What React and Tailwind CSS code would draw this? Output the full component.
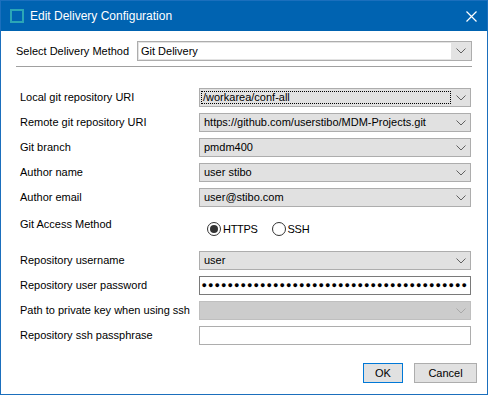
import React from "react";

const Chevron = ({ color = "#606060" }) => (
  <svg width="10" height="6" viewBox="0 0 10 6" fill="none">
    <path d="M0.5 0.5 L5 5 L9.5 0.5" stroke={color} strokeWidth="1" />
  </svg>
);

function Combo({ value, focused, disabled }) {
  return (
    <div
      className={`h-[19px] w-[272px] flex items-center border ${
        disabled ? "bg-[#cccccc] border-[#bfbfbf]" : "bg-[#e1e1e1] border-[#adadad]"
      }`}
    >
      <div className="flex-1 h-full flex items-center pl-[1px] pr-[1px]">
        {focused ? (
          <div className="flex-1 h-[13px] flex items-center border border-dotted border-black pl-[1px] leading-none">
            {value}
          </div>
        ) : (
          <span className="pl-[3px] leading-none">{value}</span>
        )}
      </div>
      <div className="w-[18px] flex items-center justify-center">
        <Chevron color={disabled ? "#a8a8a8" : "#606060"} />
      </div>
    </div>
  );
}

function Row({ label, children, className = "" }) {
  return (
    <div className={`flex items-center ${className}`}>
      <div className="w-[179px] leading-none">{label}</div>
      {children}
    </div>
  );
}

function Radio({ label, checked }) {
  return (
    <div className="flex items-center gap-[2px]">
      <div className="w-[14px] h-[14px] rounded-full border border-[#333333] bg-white flex items-center justify-center">
        {checked && <div className="w-[8px] h-[8px] rounded-full bg-[#333333]" />}
      </div>
      <span className="leading-none tracking-[-0.3px]">{label}</span>
    </div>
  );
}

export default function App() {
  return (
    <div
      className="w-[488px] h-[395px] flex flex-col border border-[#1b6fbd] bg-white text-[11px] text-black"
      style={{ fontFamily: '"Liberation Sans", Arial, sans-serif' }}
    >
      {/* title bar */}
      <div className="h-[30px] bg-[#0063b1] flex items-center pl-[9px] pr-[10px] text-white">
        <div className="w-[14px] h-[14px] border-2 border-[#2ba6b6]" />
        <span className="ml-[6px] text-[12px]">Edit Delivery Configuration</span>
        <div className="flex-1" />
        <svg width="11" height="11" viewBox="0 0 11 11">
          <path d="M0.5 0.5 L10.5 10.5 M10.5 0.5 L0.5 10.5" stroke="white" strokeWidth="1.2" />
        </svg>
      </div>

      {/* body */}
      <div className="flex-1 flex flex-col">
        <div className="flex items-center pl-[15px] mt-[10px]">
          <div className="w-[121px] leading-none">Select Delivery Method</div>
          <div className="w-[335px] h-[20px] border border-[#adadad] bg-[#e3e3e3] p-[1px] flex">
            <div className="flex-1 bg-white flex items-center pl-[2px] leading-none">Git Delivery</div>
            <div className="w-[19px] flex items-center justify-center">
              <Chevron />
            </div>
          </div>
        </div>
        <div className="ml-[15px] mt-[5px] w-[456px] h-px bg-[#a0a0a0]" />

        <div className="pl-[19px] flex flex-col">
          <Row label="Local git repository URI" className="mt-[21px]">
            <Combo value="/workarea/conf-all" focused />
          </Row>
          <Row label="Remote git repository URI" className="mt-[6px]">
            <Combo value="https://github.com/userstibo/MDM-Projects.git" />
          </Row>
          <Row label="Git branch" className="mt-[6px]">
            <Combo value="pmdm400" />
          </Row>
          <Row label="Author name" className="mt-[6px]">
            <Combo value="user  stibo" />
          </Row>
          <Row label="Author email" className="mt-[6px]">
            <Combo value="user@stibo.com" />
          </Row>

          <div className="flex mt-[11px] h-[22px]">
            <div className="w-[187px] leading-none pt-[1px]">Git Access Method</div>
            <div className="flex items-start gap-[14px] pt-[4px]">
              <Radio label="HTTPS" checked />
              <Radio label="SSH" />
            </div>
          </div>

          <Row label="Repository username" className="mt-[11px]">
            <Combo value="user" />
          </Row>
          <Row label="Repository user password" className="mt-[6px]">
            <div className="w-[272px] h-[19px] border border-[#7a7a7a] bg-white flex items-center pl-[1px] overflow-hidden">
              {Array.from({ length: 41 }).map((_, i) => (
                <span key={i} className="w-[6.5px] shrink-0 text-center text-[9px] leading-none">
                  ●
                </span>
              ))}
            </div>
          </Row>
          <Row label="Path to private key when using ssh" className="mt-[6px]">
            <Combo value="" disabled />
          </Row>
          <Row label="Repository ssh passphrase" className="mt-[6px]">
            <div className="w-[272px] h-[19px] border border-[#adadad] bg-white" />
          </Row>
        </div>

        <div className="flex justify-end gap-[11px] pr-[10px] mt-[18px]">
          <button className="w-[40px] h-[20px] border border-[#0078d7] bg-[#e1e1e1] leading-none">OK</button>
          <button className="w-[63px] h-[20px] border border-[#adadad] bg-[#e1e1e1] leading-none">Cancel</button>
        </div>
      </div>
    </div>
  );
}
